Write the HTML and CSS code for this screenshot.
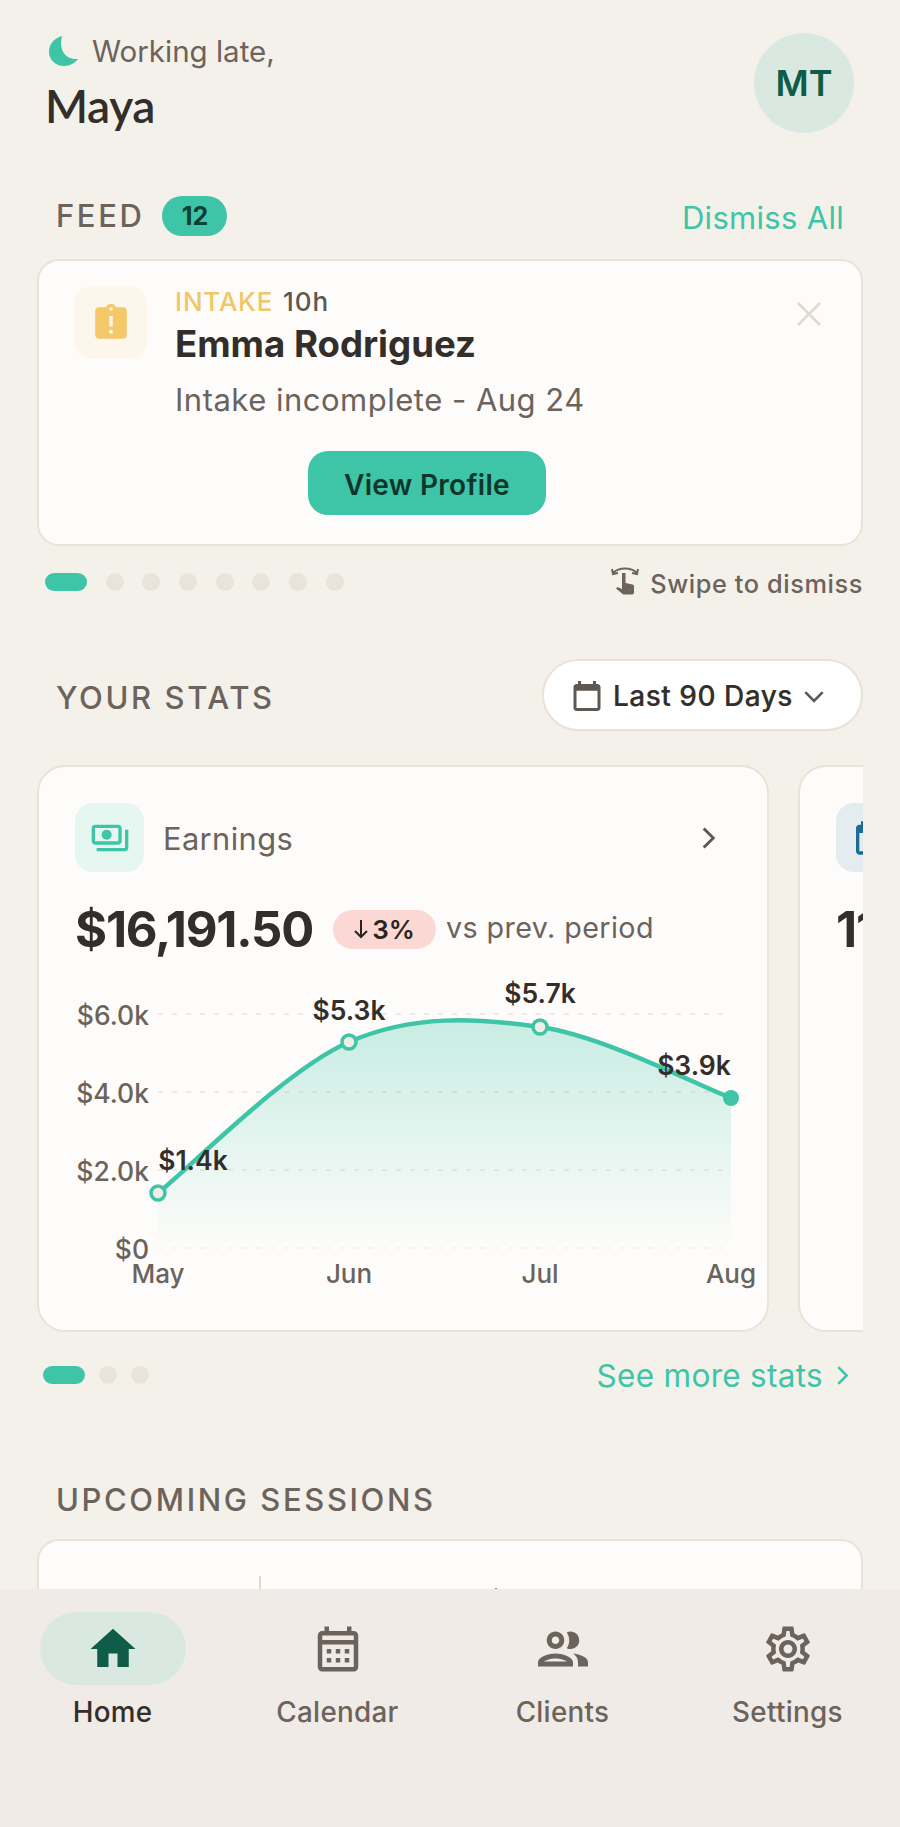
FILE: index.html
```html
<!DOCTYPE html>
<html lang="en">
<head>
<meta charset="utf-8">
<title>Home</title>
<link rel="stylesheet" href="styles.css">
</head>
<body>
<div class="app">
  <main class="main">
    <header class="top">
      <div class="hello">
        <div class="greet">
          <svg class="moon" viewBox="49 37 30 30"><path d="M62 37C52 40 49 47 49 53c0 8 7 14 15 14 6 0 11-3 14-7-10 1-20-6-16-23z"/></svg>
          <span>Working late,</span>
        </div>
        <div class="who">Maya</div>
      </div>
      <div class="avatar">MT</div>
    </header>

    <section class="feed-head">
      <div class="feed-title"><h2 class="label">FEED</h2><span class="count">12</span></div>
      <a class="link dismiss">Dismiss All</a>
    </section>

    <article class="card feed-card">
      <div class="tile tile-amber">
        <svg class="i42" viewBox="0 0 24 24"><path d="M19 3h-4.18C14.4 1.84 13.3 1 12 1c-1.3 0-2.4.84-2.82 2H5c-1.1 0-2 .9-2 2v14c0 1.1.9 2 2 2h14c1.1 0 2-.9 2-2V5c0-1.1-.9-2-2-2zm-6 15h-2v-2h2v2zm0-4h-2V8h2v6zm-1-9c-.55 0-1-.45-1-1s.45-1 1-1 1 .45 1 1-.45 1-1 1z"/></svg>
      </div>
      <div class="feed-body">
        <div class="tagline"><span class="tag">INTAKE</span> <span class="age">10h</span></div>
        <div class="name">Emma Rodriguez</div>
        <div class="desc">Intake incomplete - Aug 24</div>
        <div class="cta-wrap"><button class="cta">View Profile</button></div>
      </div>
      <svg class="close" viewBox="0 0 24 24"><path d="M1 1l22 22M23 1L1 23"/></svg>
    </article>

    <section class="pager-row swipe-row">
      <div class="dots feed-dots"><i class="pill"></i><i></i><i></i><i></i><i></i><i></i><i></i><i></i></div>
      <div class="swipe">
        <svg class="swipe-ico" viewBox="0 0 28 32"><path class="arc" d="M2 7C8 1 20 1 26 7M1 3l1 5 5-1M27 3l-1 5-5-1"/><path d="M11 7h3.5v10l7 1.500c1 .3 1.500 1 1.500 2v6c0 1-.8 2-2 2H13c-1 0-1.600-.5-2-1l-6-5 1.500-1.500 4.500 2z"/></svg>
        <span>Swipe to dismiss</span>
      </div>
    </section>

    <section class="stats-head">
      <h2 class="label">YOUR STATS</h2>
      <button class="range">
        <svg class="i36" viewBox="0 0 24 24"><path d="M19 4h-1V2h-2v2H8V2H6v2H5c-1.100 0-2 .9-2 2v14c0 1.100.9 2 2 2h14c1.100 0 2-.9 2-2V6c0-1.100-.9-2-2-2zm0 16H5V8.500h14V20z"/></svg>
        <span>Last 90 Days</span>
        <svg class="chev-down" viewBox="0 0 20 12"><path d="M2 2l8 8 8-8"/></svg>
      </button>
    </section>

    <section class="stat-strip">
      <article class="card stat-card">
        <div class="stat-top">
          <div class="tile tile-teal">
            <svg class="i40" viewBox="0 0 24 24"><path d="M19 14V6c0-1.100-.9-2-2-2H3c-1.100 0-2 .9-2 2v8c0 1.100.9 2 2 2h14c1.100 0 2-.9 2-2zm-2 0H3V6h14v8zM23 7v11c0 1.100-.9 2-2 2H4v-2h17V7h2z"/><circle cx="10" cy="10" r="3"/></svg>
          </div>
          <span class="stat-name">Earnings</span>
          <svg class="chev-right" viewBox="0 0 12 20"><path d="M2 2l8 8-8 8"/></svg>
        </div>
        <div class="stat-value">
          <span class="amount">$16,191.50</span>
          <span class="delta"><svg class="arrow" viewBox="0 0 14 20"><path d="M7 1v17M1 12l6 6 6-6"/></svg>3%</span>
          <span class="versus">vs prev. period</span>
        </div>
        <svg class="chart" viewBox="39 975 728 330">
          <defs>
            <linearGradient id="area" x1="0" y1="0" x2="0" y2="1">
              <stop offset="0" stop-color="#3ec4a7" stop-opacity=".28"/>
              <stop offset="1" stop-color="#3ec4a7" stop-opacity="0"/>
            </linearGradient>
          </defs>
          <g class="grid">
            <path d="M158 1014H727"/><path d="M158 1092H727"/><path d="M158 1170H727"/><path class="grid-zero" d="M158 1248H727"/>
          </g>
          <path fill="url(#area)" d="M158 1193C190 1168 285 1070 349 1042C413 1014 476 1018 540 1027C604 1036 699 1086 731 1098V1248H158Z"/>
          <path class="curve" d="M158 1193C190 1168 285 1070 349 1042C413 1014 476 1018 540 1027C604 1036 699 1086 731 1098"/>
          <circle class="pt" cx="158" cy="1193" r="7"/>
          <circle class="pt" cx="349" cy="1042" r="7"/>
          <circle class="pt" cx="540" cy="1027" r="7"/>
          <circle class="pt-end" cx="731" cy="1098" r="8"/>
          <g class="y-axis">
            <text x="149" y="1025">$6.0k</text><text x="149" y="1103">$4.0k</text><text x="149" y="1181">$2.0k</text><text x="149" y="1259">$0</text>
          </g>
          <g class="x-axis">
            <text x="158" y="1283">May</text><text x="349" y="1283">Jun</text><text x="540" y="1283">Jul</text><text x="731" y="1283">Aug</text>
          </g>
          <g class="val">
            <text x="193" y="1170">$1.4k</text><text x="349" y="1020">$5.3k</text><text x="540" y="1003">$5.7k</text><text x="694" y="1075">$3.9k</text>
          </g>
        </svg>
      </article>
      <article class="card stat-card next-card">
        <div class="stat-top">
          <div class="tile tile-blue">
            <svg class="i40" viewBox="0 0 24 24"><path d="M19 4h-1V2h-2v2H8V2H6v2H5c-1.100 0-2 .9-2 2v14c0 1.100.9 2 2 2h14c1.100 0 2-.9 2-2V6c0-1.100-.9-2-2-2zm0 16H5V9h14v11z"/></svg>
          </div>
        </div>
        <div class="stat-value"><span class="amount">11</span></div>
      </article>
    </section>

    <section class="pager-row more-row">
      <div class="dots stat-dots"><i class="pill"></i><i></i><i></i></div>
      <a class="link more">See more stats
        <svg class="chev-more" viewBox="0 0 12 20"><path d="M2 2l8 8-8 8"/></svg>
      </a>
    </section>

    <h2 class="label upcoming">UPCOMING SESSIONS</h2>
    <article class="card session-card"><span class="session-rule"></span><span class="session-dot"></span></article>
  </main>

  <nav class="nav">
    <a class="nav-item active">
      <span class="nav-ico"><svg class="i54" viewBox="0 0 24 24"><path d="M10 20v-6h4v6h5v-8h3L12 3 2 12h3v8z"/></svg></span>
      <span>Home</span>
    </a>
    <a class="nav-item">
      <span class="nav-ico"><svg class="i54" viewBox="0 0 24 24"><path d="M19 4h-1V2h-2v2H8V2H6v2H5c-1.100 0-2 .9-2 2v14c0 1.100.9 2 2 2h14c1.100 0 2-.9 2-2V6c0-1.100-.9-2-2-2zm0 16H5V10h14v10zm0-12H5V6h14v2zM9 14H7v-2h2v2zm4 0h-2v-2h2v2zm4 0h-2v-2h2v2zm-8 4H7v-2h2v2zm4 0h-2v-2h2v2zm4 0h-2v-2h2v2z"/></svg></span>
      <span>Calendar</span>
    </a>
    <a class="nav-item">
      <span class="nav-ico"><svg class="i60" viewBox="0 0 24 24"><path d="M9 13.750c-2.340 0-7 1.170-7 3.500V19h14v-1.750c0-2.330-4.660-3.500-7-3.500zM4.340 17c.84-.58 2.870-1.250 4.660-1.250s3.820.67 4.660 1.250H4.340zM9 12c1.930 0 3.500-1.570 3.500-3.500S10.930 5 9 5 5.500 6.570 5.500 8.500 7.070 12 9 12zm0-5c.83 0 1.500.67 1.500 1.500S9.830 10 9 10s-1.500-.67-1.500-1.500S8.170 7 9 7zm7.040 6.810c1.160.84 1.960 1.960 1.960 3.440V19h4v-1.750c0-2.020-3.500-3.170-5.960-3.440zM15 12c1.930 0 3.500-1.570 3.500-3.500S16.930 5 15 5c-.54 0-1.040.13-1.500.35.63.89 1 1.980 1 3.150s-.37 2.260-1 3.150c.46.22.96.35 1.500.35z"/></svg></span>
      <span>Clients</span>
    </a>
    <a class="nav-item">
      <span class="nav-ico"><svg class="i54" viewBox="0 0 24 24"><path d="M19.430 12.980c.04-.32.07-.64.07-.98 0-.34-.03-.66-.07-.98l2.110-1.650c.19-.15.24-.42.12-.64l-2-3.460c-.09-.16-.26-.25-.44-.25-.06 0-.12.01-.17.03l-2.490 1c-.52-.4-1.080-.73-1.690-.98l-.38-2.650C14.460 2.180 14.250 2 14 2h-4c-.25 0-.46.18-.49.42l-.38 2.650c-.61.25-1.170.59-1.690.98l-2.490-1c-.06-.02-.12-.03-.18-.03-.17 0-.34.09-.43.25l-2 3.460c-.13.22-.07.49.12.64l2.110 1.650c-.04.32-.07.65-.07.98 0 .33.03.66.07.98l-2.110 1.650c-.19.15-.24.42-.12.64l2 3.460c.09.16.26.25.44.25.06 0 .12-.01.17-.03l2.490-1c.52.4 1.080.73 1.690.98l.38 2.650c.03.24.24.42.49.42h4c.25 0 .46-.18.49-.42l.38-2.650c.61-.25 1.170-.59 1.690-.98l2.490 1c.06.02.12.03.18.03.17 0 .34-.09.43-.25l2-3.460c.12-.22.07-.49-.12-.64l-2.110-1.650zm-1.980-1.710c.04.31.05.52.05.73 0 .21-.02.43-.05.73l-.14 1.130.89.7 1.080.84-.7 1.210-1.270-.51-1.040-.42-.9.68c-.43.32-.84.56-1.250.73l-1.060.43-.16 1.130-.2 1.350h-1.400l-.19-1.350-.16-1.130-1.060-.43c-.43-.18-.83-.41-1.230-.71l-.91-.7-1.060.43-1.270.51-.7-1.210 1.080-.84.89-.7-.14-1.130c-.03-.31-.05-.54-.05-.74s.02-.43.05-.73l.14-1.130-.89-.7-1.080-.84.7-1.210 1.270.51 1.040.42.9-.68c.43-.32.84-.56 1.250-.73l1.060-.43.16-1.130.2-1.350h1.390l.19 1.350.16 1.130 1.060.43c.43.18.83.41 1.230.71l.91.7 1.060-.43 1.270-.51.7 1.210-1.070.85-.89.7.14 1.130zM12 8c-2.210 0-4 1.790-4 4s1.790 4 4 4 4-1.790 4-4-1.790-4-4-4zm0 6c-1.100 0-2-.9-2-2s.9-2 2-2 2 .9 2 2-.9 2-2 2z"/></svg></span>
      <span>Settings</span>
    </a>
  </nav>
</div>
</body>
</html>
```
FILE: styles.css
```css
* { box-sizing: border-box; margin: 0; padding: 0; }
html, body { height: 100%; }
body {
  background: #f4f1eb;
  color: #332e2a;
  font-family: Inter, "Liberation Sans", sans-serif;
  overflow: hidden;
}
svg { display: block; fill: currentColor; flex: none; }
button { font-family: inherit; border: 0; }

.app { display: flex; flex-direction: column; height: 1827px; }
.main { height: 1589px; overflow: hidden; padding: 33px 37px 0 37px; flex: none; }

.top { display: flex; justify-content: space-between; height: 100px; padding: 0 9px 0 10px; }
.greet { display: flex; align-items: center; gap: 13px; height: 36px; font-size: 29.500px; color: #6b635c; }
.moon { width: 30px; height: 30px; color: #3ec4a7; margin-left: 2px; }
.who { font-family: Lato, sans-serif; font-size: 46px; font-weight: 600; line-height: 52px; margin: 11px 0 0 -2px; letter-spacing: -.4px; }
.avatar {
  width: 100px; height: 100px; border-radius: 50%;
  background: #d9e9e1; color: #0f5c48;
  display: flex; align-items: center; justify-content: center;
  font-size: 36px; font-weight: 600;
}

.label { font-size: 31px; font-weight: 500; letter-spacing: 2.600px; color: #6b635c; line-height: 40px; }
.feed-head { display: flex; justify-content: space-between; align-items: center; height: 40px; margin-top: 63px; padding: 0 19px 0 19px; }
.feed-title { display: flex; align-items: center; gap: 18px; }
.count { width: 65px; height: 40px; border-radius: 20px; background: #3ec4a7; color: #0f3f33; display: flex; align-items: center; justify-content: center; font-size: 25px; font-weight: 700; }
.link { color: #3ec4a7; font-size: 31px; letter-spacing: .3px; }
.dismiss { padding-top: 2px; }

.card { background: #fdfcfa; border: 2px solid #e9e2da; }
.feed-card { display: flex; height: 287px; margin-top: 23px; border-radius: 22px; padding: 21px 0 0 35px; position: relative; }
.tile { display: flex; align-items: center; justify-content: center; flex: none; }
.tile-amber { width: 73px; height: 73px; margin-top: 4px; border-radius: 18px; background: #fdf6ea; color: #f5c869; }
.i42 { width: 42px; height: 42px; }
.feed-body { width: 504px; margin-left: 28px; }
.tagline { height: 40px; line-height: 40px; font-size: 26px; font-weight: 500; letter-spacing: .8px; }
.tag { color: #f0c766; }
.age { color: #5f5751; margin-left: 2px; letter-spacing: 1px; }
.name { font-size: 36.600px; font-weight: 700; line-height: 44px; color: #332e2a; }
.desc { font-size: 31px; line-height: 50px; margin-top: 9px; color: #6b635c; letter-spacing: .5px; }
.cta-wrap { display: flex; justify-content: center; margin-top: 26px; }
.cta { width: 238px; height: 64px; border-radius: 20px; background: #3ec4a7; color: #10362c; font-size: 28px; font-weight: 600; letter-spacing: .3px; padding-top: 4px; }
.close { position: absolute; top: 41px; left: 758px; width: 24px; height: 24px; fill: none; stroke: #dfd9d0; stroke-width: 2.600; }

.pager-row { display: flex; justify-content: space-between; align-items: center; height: 40px; margin-top: 16px; }
.swipe-row .swipe span { padding-top: 2px; }
.dots { display: flex; align-items: center; gap: 18.700px; }
.dots i { display: block; width: 18px; height: 18px; border-radius: 50%; background: #e9e3dc; }
.dots .pill { width: 42px; border-radius: 9px; background: #3ec4a7; }
.feed-dots { padding-left: 8px; }
.stat-dots { padding-left: 6px; gap: 14px; }
.swipe { display: flex; align-items: center; gap: 11px; font-size: 25.300px; font-weight: 500; color: #6b635c; letter-spacing: .6px; }
.swipe-ico { width: 28px; height: 32px; margin-top: -1px; }
.swipe-ico .arc { fill: none; stroke: currentColor; stroke-width: 2; }

.stats-head { display: flex; justify-content: space-between; align-items: center; height: 72px; margin-top: 57px; padding-left: 19px; }
.stats-head .label { margin-top: 6px; }
.range { display: flex; align-items: center; width: 321px; height: 72px; margin-left: auto; padding: 2px 0 0 25px; border-radius: 36px; background: #fff; border: 2px solid #e9e2da; color: #332e2a; font-size: 28px; font-weight: 500; letter-spacing: .5px; -webkit-text-stroke: .2px #332e2a; }
.range span { margin-left: 8px; }
.i36 { width: 36px; height: 36px; color: #5f5751; }
.chev-down { width: 22px; height: 13px; margin-left: 10px; fill: none; stroke: #5f5751; stroke-width: 2.400; }

.stat-strip { display: flex; gap: 29px; margin-top: 34px; overflow: hidden; }
.stat-card { flex: none; width: 732px; height: 567px; border-radius: 28px; padding-top: 36px; }
.stat-top { display: flex; align-items: center; height: 69px; padding-left: 36px; }
.tile-teal { width: 69px; height: 69px; border-radius: 18px; background: #e6f6f1; color: #3ec4a7; }
.tile-blue { width: 69px; height: 69px; border-radius: 18px; background: #e4ecef; color: #1d6a93; }
.i40 { width: 40px; height: 40px; }
.stat-name { margin: 2px 0 0 19px; font-size: 30.800px; color: #6b635c; letter-spacing: .4px; }
.chev-right { width: 15px; height: 24px; margin-left: auto; margin-right: 51px; fill: none; stroke: #5f5751; stroke-width: 2.400; }
.stat-value { display: flex; align-items: center; height: 60px; margin-top: 27px; padding-left: 36px; }
.amount { font-size: 49px; font-weight: 700; letter-spacing: -1.200px; color: #332e2a; }
.delta { display: flex; align-items: center; justify-content: center; gap: 4px; width: 103px; height: 39px; margin-left: 20px; border-radius: 20px; background: #fbd8d3; color: #2a2522; font-size: 26px; font-weight: 600; }
.arrow { width: 14px; height: 20px; fill: none; stroke: currentColor; stroke-width: 2; }
.versus { margin-left: 10px; padding-bottom: 3px; font-size: 28.700px; color: #6b635c; letter-spacing: .4px; }
.chart { width: 728px; height: 330px; margin-top: 16px; }
.grid path { fill: none; stroke: #efeae4; stroke-width: 2; stroke-dasharray: 5 9; }
.grid .grid-zero { stroke: #f7f4ef; }
.curve { fill: none; stroke: #3ec4a7; stroke-width: 4.500; }
.pt { fill: #f1eee8; stroke: #3ec4a7; stroke-width: 3.500; }
.pt-end { fill: #3ec4a7; }
.y-axis text { text-anchor: end; font-size: 26.500px; font-weight: 500; fill: #6b635c; }
.x-axis text { text-anchor: middle; font-size: 26px; font-weight: 500; fill: #6b635c; }
.val text { text-anchor: middle; font-size: 26.500px; font-weight: 600; fill: #332e2a; }

.more-row { margin-top: 23px; }
.more { display: flex; align-items: center; gap: 13px; margin-right: 14px; font-size: 31.500px; }
.chev-more { width: 13px; height: 21px; fill: none; stroke: #3ec4a7; stroke-width: 2.400; }

.upcoming { margin-top: 85px; padding-left: 19px; }
.session-card { display: flex; height: 400px; margin-top: 19px; border-radius: 22px; padding: 35px 0 0 220px; }
.session-rule { display: block; width: 2px; height: 60px; background: #e0d9d1; }
.session-dot { display: block; width: 2px; height: 4px; margin: 12px 0 0 234px; background: #8b837b; }

.nav { flex: 1; display: grid; grid-template-columns: repeat(4, 225px); background: #f0ebe6; }
.nav-item { display: flex; flex-direction: column; align-items: center; font-size: 27.800px; font-weight: 500; color: #6b635c; padding-top: 23px; letter-spacing: .3px; }
.nav-ico { width: 146px; height: 73px; border-radius: 37px; display: flex; align-items: center; justify-content: center; margin-bottom: 7px; line-height: 1; }
.nav-item > span:last-child { line-height: 40px; }
.nav-item.active { color: #332e2a; }
.nav-item.active .nav-ico { background: #d9e9e1; color: #0f5c48; }
.i54 { width: 54px; height: 54px; }
.i60 { width: 60px; height: 60px; }
```
